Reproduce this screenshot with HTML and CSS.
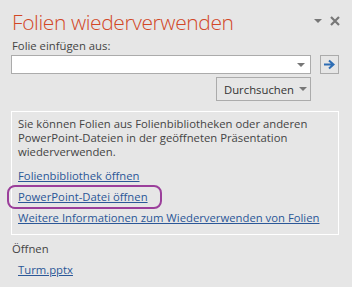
FILE: index.html
```html
<!DOCTYPE html>
<html lang="de">
<head>
    <meta charset="UTF-8">
    <title>Folien wiederverwenden</title>
    <link rel="stylesheet" href="styles.css">
</head>
<body>
    <div class="pane">
        <div class="header">
            <h1>Folien wiederverwenden</h1>
            <div class="controls">
                <span class="tri"></span>
                <svg class="close" width="10" height="10" viewBox="0 0 10 10">
                    <path d="M1 1L9 9M9 1L1 9" stroke="#777" stroke-width="2.2"/>
                </svg>
            </div>
        </div>
        <div class="label">Folie einfügen aus:</div>
        <div class="source-row">
            <div class="combo"><span class="tri"></span></div>
            <div class="go">
                <svg width="13" height="11" viewBox="0 0 13 11">
                    <path d="M1 5.5H10M6 1.5L10.5 5.5L6 9.5" fill="none" stroke="#2e6db4" stroke-width="2"/>
                </svg>
            </div>
        </div>
        <div class="browse-row">
            <div class="browse">Durchsuchen <span class="tri"></span></div>
        </div>
        <div class="info">
            <p>Sie können Folien aus Folienbibliotheken oder anderen PowerPoint-Dateien in der geöffneten Präsentation wiederverwenden.</p>
            <a href="#">Folienbibliothek öffnen</a>
            <span class="marked"><a href="#">PowerPoint-Datei öffnen</a></span>
            <a href="#">Weitere Informationen zum Wiederverwenden von Folien</a>
        </div>
        <div class="recent">
            <div class="recent-title">Öffnen</div>
            <a href="#">Turm.pptx</a>
        </div>
    </div>
</body>
</html>
```

FILE: styles.css
```css
body {
    margin: 0;
    background: #e6e6e6;
    font-family: "Open Sans", sans-serif;
    font-size: 11.3px;
    color: #444;
}
.pane {
    padding: 7px 13px 0 11px;
}
.header {
    display: flex;
    justify-content: space-between;
}
h1 {
    margin: 0 0 0 1px;
    font-size: 21px;
    font-weight: 300;
    letter-spacing: -0.4px;
    line-height: 30px;
    color: #d24726;
}
.controls {
    display: flex;
    align-items: center;
    gap: 8px;
    height: 12px;
    margin-top: 8px;
    margin-right: -1px;
}
.tri {
    display: inline-block;
    width: 0;
    height: 0;
    border-left: 4px solid transparent;
    border-right: 4px solid transparent;
    border-top: 4px solid #777;
}
.label {
    margin: 1px 0 0 1px;
    line-height: 16px;
}
.source-row {
    display: flex;
    gap: 9px;
    margin-top: 1px;
}
.combo {
    flex: 1;
    height: 17px;
    background: #fff;
    border: 1px solid #ababab;
    display: flex;
    justify-content: flex-end;
    align-items: center;
    padding-right: 5px;
}
.go {
    width: 17px;
    height: 17px;
    border: 1px solid #ababab;
    display: flex;
    align-items: center;
    justify-content: center;
}
.browse-row {
    display: flex;
    justify-content: flex-end;
    padding-right: 28px;
    margin-top: 3px;
}
.browse {
    box-sizing: border-box;
    width: 95px;
    height: 24px;
    border: 1px solid #ababab;
    display: flex;
    align-items: center;
    justify-content: flex-end;
    gap: 5px;
    padding-right: 3px;
    color: #333;
}
.info {
    margin-top: 10px;
    border: 1px solid #fff;
    padding: 5px 8px 6px 6px;
}
.info p {
    margin: 0 0 6px;
    line-height: 14px;
}
.info a, .recent a {
    display: block;
    color: #2b5797;
    line-height: 21px;
}
.marked {
    position: relative;
    display: block;
}
.marked::after {
    content: "";
    position: absolute;
    left: -11px;
    width: 151px;
    top: -1px;
    bottom: -2px;
    border: 2px solid #9b3f9b;
    border-radius: 8px;
}
.recent {
    padding: 6px 0 0 1px;
}
.recent-title {
    line-height: 16px;
    margin-bottom: 2px;
}
.recent a {
    margin-left: 6px;
    display: inline-block;
}
```
